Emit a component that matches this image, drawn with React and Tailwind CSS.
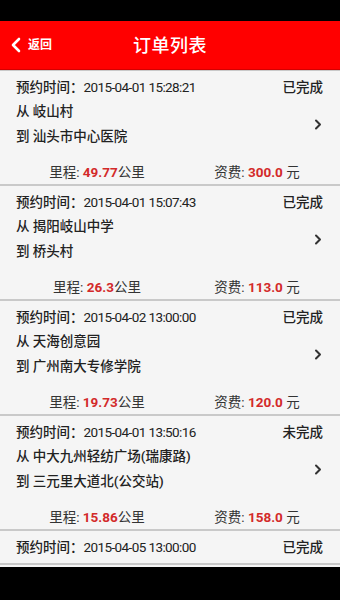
import React from "react";

const orders = [
  { time: "2015-04-01 15:28:21", status: "已完成", from: "岐山村", to: "汕头市中心医院", dist: "49.77", fee: "300.0" },
  { time: "2015-04-01 15:07:43", status: "已完成", from: "揭阳岐山中学", to: "桥头村", dist: "26.3", fee: "113.0" },
  { time: "2015-04-02 13:00:00", status: "已完成", from: "天海创意园", to: "广州南大专修学院", dist: "19.73", fee: "120.0" },
  { time: "2015-04-01 13:50:16", status: "未完成", from: "中大九州轻纺广场(瑞康路)", to: "三元里大道北(公交站)", dist: "15.86", fee: "158.0" },
];

function Chevron() {
  return (
    <svg width="8" height="11" viewBox="0 0 8 11" className="block">
      <path d="M2 1.5 L6 5.5 L2 9.5" fill="none" stroke="#333" strokeWidth="2" strokeLinecap="round" strokeLinejoin="round" />
    </svg>
  );
}

function TimeRow({ time, status }) {
  return (
    <div className="h-[22px] flex items-center justify-between text-[13.5px] font-medium text-[#222]">
      <span>
        预约时间：<span className="text-[13.5px] font-normal tracking-[-0.6px]">{time}</span>
      </span>
      <span>{status}</span>
    </div>
  );
}

function Card({ o }) {
  return (
    <div className="bg-[#f5f5f5] border-b-2 border-[#c9c9c9] shrink-0">
      <div className="pt-[5px] pl-[16px] pr-[17px]">
        <TimeRow time={o.time} status={o.status} />
        <div className="flex items-center">
          <div className="flex-1">
            <div className="h-[26px] flex items-center text-[13.5px] font-medium text-[#222] whitespace-pre">从 {o.from}</div>
            <div className="h-[25px] flex items-center text-[13.5px] font-medium text-[#222] whitespace-pre">到 {o.to}</div>
          </div>
          <div className="pr-[1px] pt-[1px]">
            <Chevron />
          </div>
        </div>
      </div>
      <div className="mt-[11px] h-[24px] grid grid-cols-2 pl-[17px] pr-[3px] text-[13.5px] text-[#333]">
        <div className="flex items-center justify-center whitespace-pre">
          里程: <span className="font-bold text-[13.5px] text-[#d32a2a]">{o.dist}</span>公里
        </div>
        <div className="flex items-center justify-center whitespace-pre">
          资费: <span className="font-bold text-[13.5px] text-[#d32a2a]">{o.fee}</span> 元
        </div>
      </div>
    </div>
  );
}

export default function App() {
  return (
    <div
      className="w-[340px] h-[600px] flex flex-col bg-black overflow-hidden"
      style={{ fontFamily: 'Roboto, "Noto Sans CJK SC", sans-serif' }}
    >
      <div className="h-[21px] bg-black shrink-0" />
      <div className="h-[49px] bg-[#ff0000] border-b border-[#d40000] shrink-0 relative flex items-center justify-center">
        <div className="absolute left-[10px] top-0 h-full flex items-center gap-[6px] text-white">
          <svg width="12" height="16" viewBox="0 0 12 16" className="block">
            <path d="M9 2 L3 8 L9 14" fill="none" stroke="#fff" strokeWidth="2.6" strokeLinecap="round" strokeLinejoin="round" />
          </svg>
          <span className="text-[12px] font-bold">返回</span>
        </div>
        <span className="text-white text-[18px] font-medium tracking-[0.5px]">订单列表</span>
      </div>
      <div className="flex-1 flex flex-col overflow-hidden bg-[#f5f5f5] border-t border-[#c9c9c9]">
        {orders.map((o, i) => (
          <Card key={i} o={o} />
        ))}
        <div className="bg-[#f5f5f5] border-b-2 border-[#c9c9c9] shrink-0 pt-[5px] pl-[16px] pr-[17px] h-[34px]">
          <TimeRow time="2015-04-05 13:00:00" status="已完成" />
        </div>
      </div>
      <div className="h-[33px] bg-black shrink-0" />
    </div>
  );
}
